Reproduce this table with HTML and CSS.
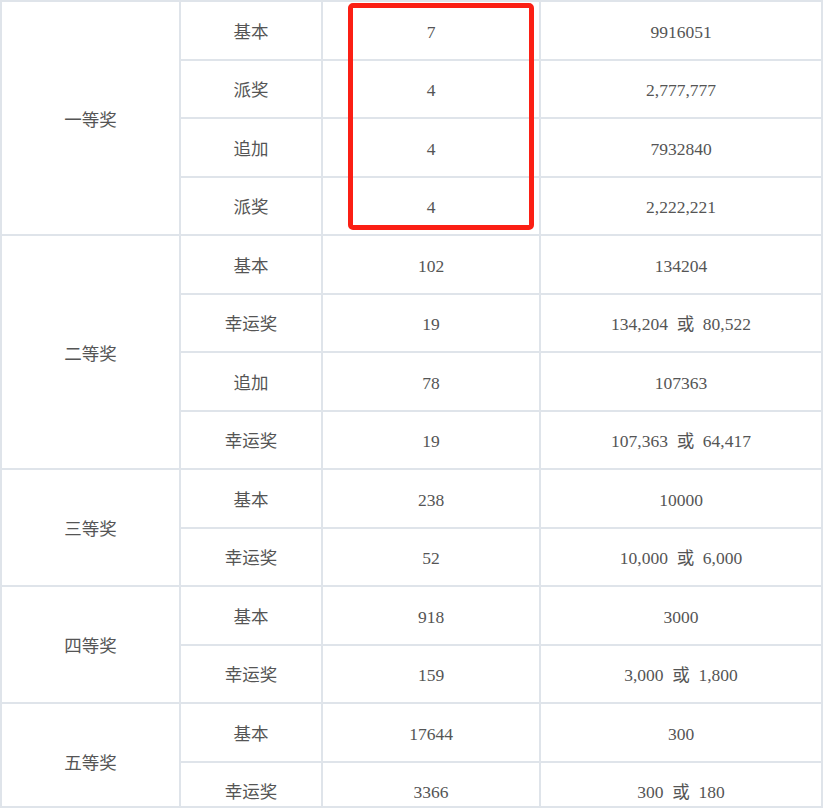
FILE: index.html
```html
<!DOCTYPE html>
<html lang="zh-CN">
<head>
<meta charset="utf-8">
<title>奖级表</title>
<link rel="stylesheet" href="styles.css">
</head>
<body>
<div class="sheet">
  <div class="grid">
    <div class="cell level span4">一等奖</div>
    <div class="cell">基本</div><div class="cell">7</div><div class="cell">9916051</div>
    <div class="cell">派奖</div><div class="cell">4</div><div class="cell">2,777,777</div>
    <div class="cell">追加</div><div class="cell">4</div><div class="cell">7932840</div>
    <div class="cell">派奖</div><div class="cell">4</div><div class="cell">2,222,221</div>

    <div class="cell level span4">二等奖</div>
    <div class="cell">基本</div><div class="cell">102</div><div class="cell">134204</div>
    <div class="cell">幸运奖</div><div class="cell">19</div><div class="cell">134,204&ensp;或&ensp;80,522</div>
    <div class="cell">追加</div><div class="cell">78</div><div class="cell">107363</div>
    <div class="cell">幸运奖</div><div class="cell">19</div><div class="cell">107,363&ensp;或&ensp;64,417</div>

    <div class="cell level span2">三等奖</div>
    <div class="cell">基本</div><div class="cell">238</div><div class="cell">10000</div>
    <div class="cell">幸运奖</div><div class="cell">52</div><div class="cell">10,000&ensp;或&ensp;6,000</div>

    <div class="cell level span2">四等奖</div>
    <div class="cell">基本</div><div class="cell">918</div><div class="cell">3000</div>
    <div class="cell">幸运奖</div><div class="cell">159</div><div class="cell">3,000&ensp;或&ensp;1,800</div>

    <div class="cell level span2">五等奖</div>
    <div class="cell">基本</div><div class="cell">17644</div><div class="cell">300</div>
    <div class="cell">幸运奖</div><div class="cell">3366</div><div class="cell">300&ensp;或&ensp;180</div>
  </div>
  <div class="highlight"></div>
</div>
</body>
</html>
```

FILE: styles.css
```css
html, body {
  margin: 0;
  padding: 0;
  background: #ffffff;
}

.sheet {
  position: relative;
  width: 823px;
  height: 806px;
  overflow: hidden;
  border-bottom: 2px solid #dfe4ea;
}

.grid {
  display: grid;
  grid-template-columns: 179px 142px 218px 282px;
  grid-auto-rows: 58.5px;
  border-top: 2px solid #dfe4ea;
  border-left: 2px solid #dfe4ea;
  font-family: "Liberation Serif", "Noto Sans CJK SC", serif;
  font-size: 17.5px;
  color: #555555;
}

.cell {
  display: flex;
  align-items: center;
  justify-content: center;
  padding-top: 3px;
  border-right: 2px solid #dfe4ea;
  border-bottom: 2px solid #dfe4ea;
  white-space: nowrap;
  line-height: 20px;
}

.level {
  grid-column: 1;
}

.span4 {
  grid-row: span 4;
}

.span2 {
  grid-row: span 2;
}

.highlight {
  position: absolute;
  left: 348px;
  top: 3px;
  width: 176px;
  height: 217px;
  border: 5px solid #fb1f14;
  border-radius: 5px;
}
```
